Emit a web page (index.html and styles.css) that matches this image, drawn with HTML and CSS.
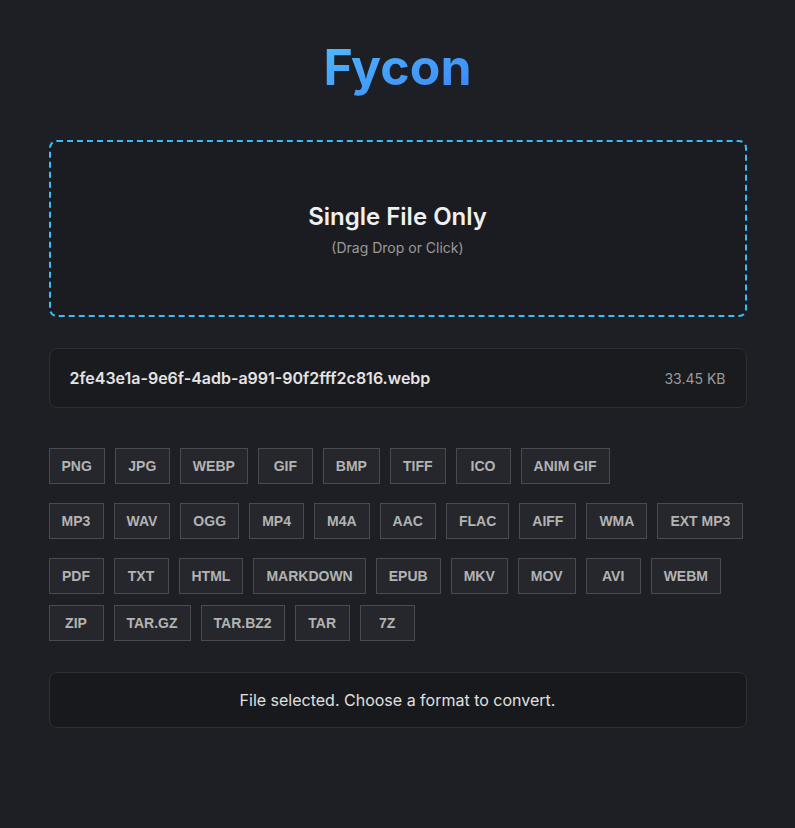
FILE: index.html
```html
<!DOCTYPE html>
<html lang="en">
<head>
<meta charset="utf-8">
<title>Fycon</title>
<link rel="stylesheet" href="styles.css">
</head>
<body>
<main class="app">
  <h1 class="title">Fycon</h1>
  <div class="dropzone">
    <div class="drop-title">Single File Only</div>
    <div class="drop-sub">(Drag Drop or Click)</div>
  </div>
  <div class="file-card">
    <span class="file-name">2fe43e1a-9e6f-4adb-a991-90f2fff2c816.webp</span>
    <span class="file-size">33.45 KB</span>
  </div>
  <div class="formats">
    <div class="group">
      <button class="fmt">PNG</button><button class="fmt">JPG</button><button class="fmt">WEBP</button><button class="fmt">GIF</button><button class="fmt">BMP</button><button class="fmt">TIFF</button><button class="fmt">ICO</button><button class="fmt">ANIM GIF</button>
    </div>
    <div class="group">
      <button class="fmt">MP3</button><button class="fmt">WAV</button><button class="fmt">OGG</button><button class="fmt">MP4</button><button class="fmt">M4A</button><button class="fmt">AAC</button><button class="fmt">FLAC</button><button class="fmt">AIFF</button><button class="fmt">WMA</button><button class="fmt">EXT MP3</button>
    </div>
    <div class="group">
      <button class="fmt">PDF</button><button class="fmt">TXT</button><button class="fmt">HTML</button><button class="fmt">MARKDOWN</button><button class="fmt">EPUB</button><button class="fmt">MKV</button><button class="fmt">MOV</button><button class="fmt">AVI</button><button class="fmt">WEBM</button><button class="fmt">ZIP</button><button class="fmt">TAR.GZ</button><button class="fmt">TAR.BZ2</button><button class="fmt">TAR</button><button class="fmt">7Z</button>
    </div>
  </div>
  <div class="status">File selected. Choose a format to convert.</div>
</main>
</body>
</html>
```

FILE: styles.css
```css
html, body {
  margin: 0;
  padding: 0;
  background: #1e1f24;
  font-family: Inter, "Noto Sans", sans-serif;
  color: #e6e6e6;
}

.app {
  width: 698px;
  margin: 0 auto;
  padding: 37px 0 40px;
}

.title {
  margin: 0 auto 43px;
  width: fit-content;
  text-align: center;
  font-size: 50px;
  font-weight: 700;
  line-height: 60px;
  background: linear-gradient(160deg, #4fbdff 0%, #3c84f6 100%);
  -webkit-background-clip: text;
  background-clip: text;
  color: transparent;
}

.dropzone {
  box-sizing: border-box;
  height: 177px;
  padding-top: 8px;
  border: 2px dashed #38bdf8;
  border-radius: 8px;
  background: #1b1c21;
  display: flex;
  flex-direction: column;
  align-items: center;
  justify-content: center;
  gap: 1px;
}

.drop-title {
  font-size: 24px;
  font-weight: 600;
  color: #f0f0f0;
  line-height: 30px;
}

.drop-sub {
  font-size: 14px;
  color: #9a9a9a;
  line-height: 30px;
}

.file-card {
  box-sizing: border-box;
  margin-top: 31px;
  height: 60px;
  border: 1px solid #2e2f35;
  border-radius: 8px;
  background: #1a1b1f;
  display: flex;
  align-items: center;
  justify-content: space-between;
  padding: 0 20px;
}

.file-name {
  font-size: 16px;
  font-weight: 600;
  color: #e4e4e4;
}

.file-size {
  font-size: 14px;
  color: #9a9a9a;
}

.formats {
  margin-top: 40px;
  display: flex;
  flex-direction: column;
  gap: 19px;
}

.group {
  display: flex;
  flex-wrap: wrap;
  gap: 11px 10px;
}

.fmt {
  box-sizing: border-box;
  height: 36px;
  min-width: 55px;
  padding: 0 12px;
  background: #26272c;
  border: 1px solid #4a4b50;
  border-radius: 0;
  color: #b3b3b3;
  font-family: "Liberation Sans", Arial, sans-serif;
  font-size: 14px;
  font-weight: 700;
  cursor: pointer;
}

.status {
  box-sizing: border-box;
  margin-top: 31px;
  height: 56px;
  border: 1px solid #2e2f35;
  border-radius: 8px;
  background: #18191d;
  display: flex;
  align-items: center;
  justify-content: center;
  font-size: 16px;
  color: #e0e0e0;
}
```
